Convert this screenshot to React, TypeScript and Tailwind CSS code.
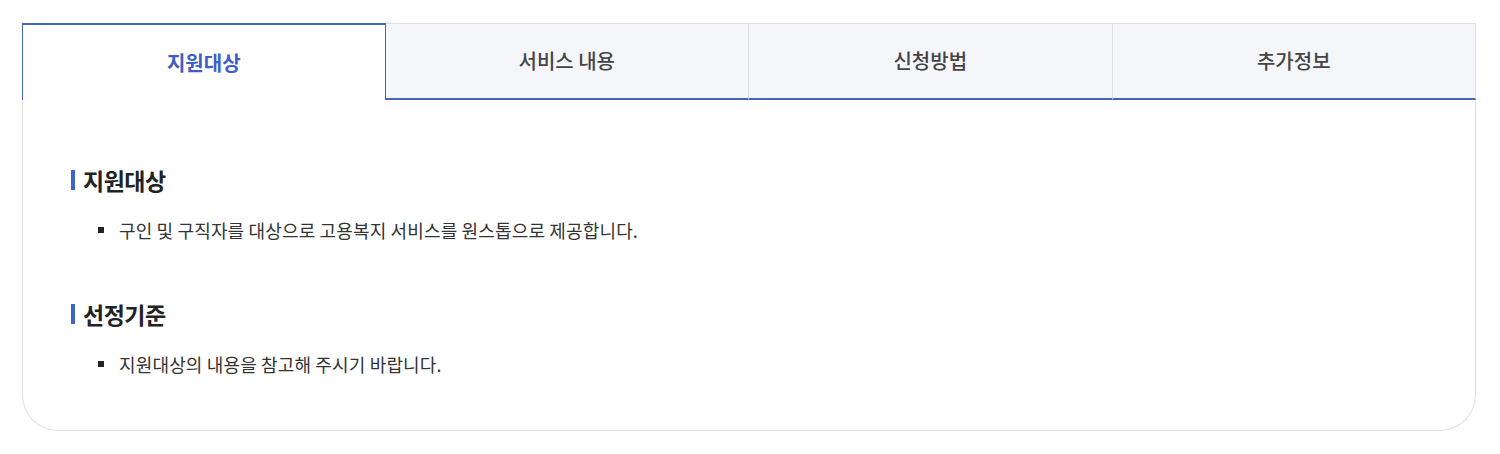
import React, { useState } from 'react';

const tabs = ['지원대상', '서비스 내용', '신청방법', '추가정보'];

const sections = [
  { title: '지원대상', items: ['구인 및 구직자를 대상으로 고용복지 서비스를 원스톱으로 제공합니다.'] },
  { title: '선정기준', items: ['지원대상의 내용을 참고해 주시기 바랍니다.'] },
];

const App: React.FC = () => {
  const [active, setActive] = useState(0);

  return (
    <div
      className="min-h-screen w-full bg-white pl-[22px] pr-[24px] pt-[23px]"
      style={{ fontFamily: '"Noto Sans CJK KR", "Noto Sans", sans-serif' }}
    >
      {/* Tabs */}
      <div className="grid grid-cols-4">
        {tabs.map((tab, i) => {
          const isActive = i === active;
          const isLast = i === tabs.length - 1;
          return (
            <button
              key={tab}
              onClick={() => setActive(i)}
              className={
                isActive
                  ? 'h-[77px] bg-white border-t-2 border-x border-[#4566ba] text-[20px] font-bold text-[#3d5ec4]'
                  : `h-[77px] bg-[#f5f6fa] border-t border-t-[#dddfe3] border-b-2 border-b-[#4566ba] ${
                      isLast || i + 1 !== active ? 'border-r border-r-[#dddfe3]' : ''
                    } text-[20px] font-medium text-[#444]`
              }
            >
              {tab}
            </button>
          );
        })}
      </div>

      {/* Content */}
      <div className="border-x border-b border-[#dddfe3] rounded-b-[36px] pl-[48px] pr-8 pt-[65px] pb-[53px]">
        {sections.map((s, idx) => (
          <div key={s.title} className={idx > 0 ? 'mt-[56px]' : ''}>
            <h3 className="flex items-center text-[23px] leading-[30px] font-bold text-[#222] tracking-[-0.5px]">
              <span className="inline-block w-[4px] h-[20px] bg-[#3f63d3] mr-[8px]" />
              {s.title}
            </h3>
            <ul className="mt-[22px]">
              {s.items.map((item) => (
                <li key={item} className="flex items-center text-[18px] leading-[26px] text-[#333] tracking-[0.15px]">
                  <span className="inline-block w-[6px] h-[6px] bg-[#222] ml-[27px] mr-[15px]" />
                  {item}
                </li>
              ))}
            </ul>
          </div>
        ))}
      </div>
    </div>
  );
};

export default App;
